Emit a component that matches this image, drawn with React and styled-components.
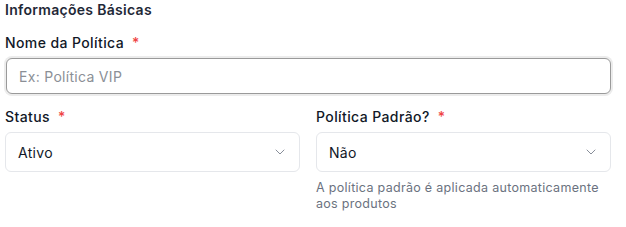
import React from 'react'
import styled, { createGlobalStyle } from 'styled-components'
import { ChevronDown } from 'lucide-react'

const GlobalStyle = createGlobalStyle`
  body {
    margin: 0;
    background: #fff;
    font-family: Inter, 'Noto Sans', sans-serif;
    color: #1f2937;
  }
`

const Section = styled.section`
  width: 606px;
  padding: 0 15px 0 5px;
`

const Title = styled.h3`
  margin: 0 0 13px;
  font-size: 14px;
  line-height: 20px;
  font-weight: 600;
  letter-spacing: 0.3px;
  color: #1f2937;
`

const Field = styled.div`
  display: flex;
  flex-direction: column;
  margin-bottom: ${(p) => p.$mb || 0}px;
`

const Label = styled.label`
  font-size: 14px;
  line-height: 20px;
  font-weight: 500;
  letter-spacing: 0.4px;
  color: #111827;
  margin-bottom: 5px;
`

const Required = styled.span`
  color: #ef4444;
  margin-left: 8px;
`

const Input = styled.input`
  height: 36px;
  box-sizing: border-box;
  margin: 0 0 0 1px;
  padding: 0 12px;
  border: 1px solid #9a9a9a;
  border-radius: 6px;
  box-shadow: 0 0 0 2px #ececec;
  font-family: inherit;
  font-size: 14px;
  letter-spacing: 0.3px;
  color: #111827;
  outline: none;

  &::placeholder {
    color: #8b8f96;
  }
`

const Row = styled.div`
  display: grid;
  grid-template-columns: 1fr 1fr;
  gap: 16px;
`

const Select = styled.div`
  height: 40px;
  box-sizing: border-box;
  display: flex;
  align-items: center;
  justify-content: space-between;
  padding: 0 11px 0 12px;
  border: 1px solid #e5e7eb;
  border-radius: 6px;
  font-size: 14px;
  letter-spacing: 0.3px;
  color: #111827;

  svg {
    color: #6b7280;
    opacity: 0.8;
  }
`

const Help = styled.p`
  margin: 8px 0 0;
  font-size: 12.5px;
  line-height: 16px;
  letter-spacing: 0.3px;
  color: #6b7280;
`

export default function App() {
  return (
    <>
      <GlobalStyle />
      <Section>
        <Title>Informações Básicas</Title>
        <Field $mb={13}>
          <Label>
            Nome da Política<Required>*</Required>
          </Label>
          <Input placeholder="Ex: Política VIP" autoFocus />
        </Field>
        <Row>
          <Field>
            <Label>
              Status<Required>*</Required>
            </Label>
            <Select>
              <span>Ativo</span>
              <ChevronDown size={16} strokeWidth={1.5} />
            </Select>
          </Field>
          <Field>
            <Label>
              Política Padrão?<Required>*</Required>
            </Label>
            <Select>
              <span>Não</span>
              <ChevronDown size={16} strokeWidth={1.5} />
            </Select>
            <Help>A política padrão é aplicada automaticamente aos produtos</Help>
          </Field>
        </Row>
      </Section>
    </>
  )
}
